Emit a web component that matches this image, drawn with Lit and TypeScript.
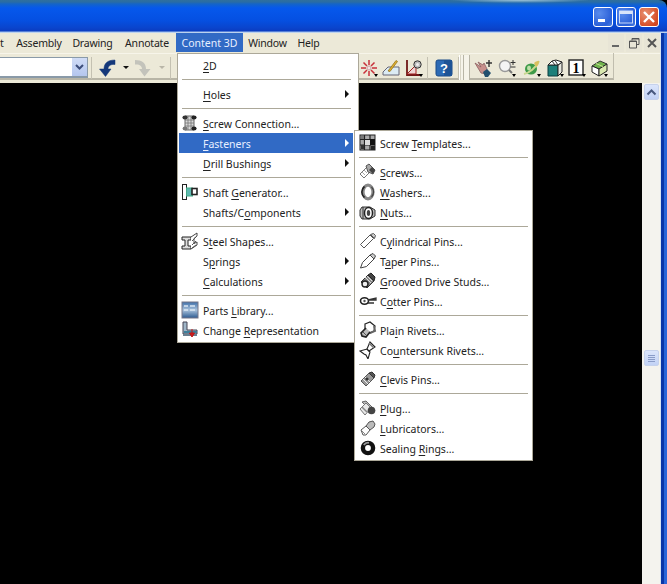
import { LitElement, html, css, svg } from "lit";
import { customElement } from "lit/decorators.js";

const tinyDrop = svg`<path d="M14 15h4l-2 3z" fill="#000"/>`;

const icons: Record<string, any> = {
  screwconn: svg`<path d="M4 2h9v14H4z" fill="#d8d8d8" stroke="#666"/><path d="M4 6h9M4 9h9M4 12h9M7 2v14M10 2v14" stroke="#777" stroke-width=".8"/><ellipse cx="4" cy="3.5" rx="2.6" ry="2" fill="#333"/><ellipse cx="13" cy="3.5" rx="2.6" ry="2" fill="#222"/><ellipse cx="4" cy="14.5" rx="2.4" ry="2" fill="#777"/><ellipse cx="13" cy="14.5" rx="2.6" ry="2" fill="#222"/>`,
  shaft: svg`<rect x="1.5" y="1.5" width="4" height="15" fill="#fff" stroke="#222"/><rect x="5.5" y="5" width="6" height="8" fill="#5fb8b0" stroke="#4a8"/><rect x="11" y="5.5" width="5" height="6" fill="#fff" stroke="#222" stroke-width="1.6"/>`,
  steel: svg`<path d="M1 5h9v3H7v6h3v3H1v-3h3V8H1z" fill="#ddd" stroke="#222"/><path d="M10 5l6-4v3l-3 2.5v5L16 10v3l-6 4" fill="#fff" stroke="#444"/><path d="M11 9l4-4M11 13l4-4M11 16l4-3" stroke="#555"/>`,
  parts: svg`<defs><linearGradient id="pg" x1="0" y1="0" x2="0" y2="1"><stop offset="0" stop-color="#3f6fa8"/><stop offset=".5" stop-color="#a9c2dc"/><stop offset="1" stop-color="#2c5a90"/></linearGradient></defs><rect x="1" y="1" width="16" height="16" fill="url(#pg)" stroke="#778"/><path d="M3 5h4M9 5h5M3 9h4M9 9h5" stroke="#dce8f4" stroke-width="1.6"/>`,
  change: svg`<path d="M2 1h4v8h10v4H2z" fill="#9fb6c8" stroke="#445"/><path d="M3 10h13v2H3z" fill="#3d7f9b"/><path d="M2 13h14v2H2z" fill="#6a7f90"/><path d="M11 8v5M8.5 12h5L11 16z" stroke="#c01818" fill="#d01c1c"/>`,
  templates: svg`<rect x="1" y="1" width="15" height="15" fill="#aaa" stroke="#222"/><path d="M5.5 1v15M11 1v15M1 5.5h15M1 11h15" stroke="#222" stroke-width="1.2"/><rect x="11" y="5" width="5" height="6" fill="#111"/><rect x="6" y="6" width="5" height="5" fill="#ddd"/><rect x="2" y="2" width="3" height="3" fill="#777"/><rect x="2" y="11" width="3" height="4" fill="#333"/><rect x="12" y="12" width="4" height="4" fill="#222"/>`,
  screws: svg`<path d="M1 11l7-7 4 4-7 7z" fill="#fff" stroke="#777"/><path d="M7 3l3-2 6 6-2 4-5-2z" fill="#a8a8a8" stroke="#555"/><path d="M10 7l4 4 2-4-3-3z" fill="#444"/><path d="M3 9l3 3M5 7l3 3" stroke="#aaa"/>`,
  washers: svg`<ellipse cx="9" cy="9" rx="5" ry="6.800" fill="none" stroke="#888" stroke-width="3.200"/><path d="M5.500 3.500A7 7 0 0 0 5.500 14.500" fill="none" stroke="#222" stroke-width="1.600"/><path d="M12.500 4A7 7 0 0 1 12.500 14" fill="none" stroke="#444" stroke-width="1.200"/>`,
  nuts: svg`<path d="M3 4h8l5 3v6l-5 3H3l-2-3V7z" fill="#bbb" stroke="#333"/><ellipse cx="9.5" cy="10" rx="4" ry="5.5" fill="#fff" stroke="#222" stroke-width="1.5"/><ellipse cx="9.5" cy="10" rx="1.7" ry="3" fill="#444"/><path d="M4 4v12" stroke="#333"/>`,
  cyl: svg`<path d="M1.5 12.5L11 3l3.5 3.5L5 16z" fill="#fff" stroke="#555"/><path d="M11.5 2.5l3-1 2 2-1 3z" fill="#ccc" stroke="#555"/>`,
  taper: svg`<path d="M1.5 16l2-5.5L11 3l4 4-7.500 7.500z" fill="#fff" stroke="#444"/><path d="M11 3l3-1.500 2.500 2.500-1.500 3z" fill="#ccc" stroke="#444"/>`,
  grooved: svg`<path d="M2 10l7-7 6 6-7 7z" fill="#888" stroke="#333"/><path d="M9 3l3-2 4 4-1 4z" fill="#444" stroke="#222"/><circle cx="6" cy="12" r="3" fill="#eee" stroke="#222" stroke-width="1.400"/><path d="M6 5l6 6M8 4l5 5" stroke="#ddd"/>`,
  cotter: svg`<ellipse cx="5.5" cy="9" rx="4" ry="3.200" fill="#fff" stroke="#222" stroke-width="1.600"/><circle cx="5.500" cy="9" r="1.200" fill="#555"/><path d="M9 8l8-2v2H9zM9 11h6" stroke="#333" stroke-width="1.300" fill="#999"/>`,
  plain: svg`<path d="M6 3l5-2 5 4-1 5-4 2-5-4z" fill="#fff" stroke="#222" stroke-width="1.200"/><path d="M11 12l5-2-1-5" fill="none" stroke="#666" stroke-width="2"/><path d="M7 7L2 12l1 3 4 1 4-5" fill="#bbb" stroke="#222" stroke-width="1.600"/><path d="M4 11l3 3" stroke="#555"/>`,
  counter: svg`<path d="M1 10l7-2 3 3-2 7-2-4-2-1z" fill="#fff" stroke="#222" stroke-width="1.100"/><path d="M8 8l3-7 5 5-6 4z" fill="#fff" stroke="#222" stroke-width="1.100"/><path d="M10 2l5 5" stroke="#777" stroke-width="1.500"/>`,
  clevis: svg`<path d="M2 11l8-8 5 5-8 8z" fill="#999" stroke="#555"/><path d="M10 3l3-1 3 3-1 3z" fill="#555" stroke="#333"/><path d="M4 9l5 5M6 7l5 5" stroke="#eee"/><circle cx="8" cy="9" r="1.600" fill="#333"/>`,
  plug: svg`<path d="M3 3l4-1 9 9-2 3z" fill="#bbb" stroke="#666"/><path d="M1 10l6-6 5 5-6 7z" fill="#e8e8e8" stroke="#777"/><circle cx="12.5" cy="11.500" r="3.800" fill="#444"/><path d="M3 8l5 5" stroke="#888" stroke-width="1.500"/>`,
  lub: svg`<path d="M2 11l5-4 4 4-4 5H4z" fill="#fff" stroke="#555"/><path d="M7 7l3-4 4-1 2 3-1 3-4 3z" fill="#bbb" stroke="#555"/><path d="M3 12l3 3" stroke="#888"/>`,
  sealing: svg`<circle cx="9" cy="9" r="5.100" fill="none" stroke="#111" stroke-width="4.400"/><path d="M4.800 6A5.300 5.300 0 0 1 10 3.800" fill="none" stroke="#999" stroke-width="1.800"/>`,
};

const tbIcons = {
  undo: svg`<path d="M17 1C10 1 6 4 6 10H1.500L7.500 17.500 13 10H10c0-3 2.500-5 7-4.500z" fill="#15387a" stroke="#15387a" stroke-width=".5"/>`,
  redo: svg`<path d="M1 1c7 0 11 3 11 9h4.500L10.500 17.500 5 10h3c0-3-2.500-5-7-4.500z" fill="#c3c3bb"/>`,
  star: svg`<g stroke="#c8303a" stroke-width="1.500"><path d="M9 1v5M9 12v5M1 9h5M12 9h5M3.500 3.500L7 7M11 11l3.500 3.500M14.500 3.500L11 7M7 11l-3.500 3.500"/></g><circle cx="9" cy="9" r="2" fill="#f4e4e4" stroke="#c8a0a0"/>${tinyDrop}`,
  pen: svg`<path d="M1 13l5-5h11v8H1z" fill="#dcecf4" stroke="#667"/><path d="M6 12L14 1.500l1.500 1L8 12.500z" fill="#e0b030" stroke="#8a6a10" stroke-width=".7"/>`,
  graph: svg`<path d="M2 1v15h14" fill="none" stroke="#701818" stroke-width="1.800"/><path d="M2 15L11 6v9z" fill="#efd4d4" stroke="#a02020"/><circle cx="12.500" cy="5.500" r="3.700" fill="#bbb" stroke="#333"/><circle cx="12.500" cy="5.500" r="1.500" fill="#eee"/>${tinyDrop}`,
  help: svg`<rect x="1" y="1" width="16" height="16" rx="2" fill="#2c6ab5" stroke="#1a4a88"/><path d="M9 1h7a1 1 0 0 1 1 1v15H9z" fill="#1d5396"/><text x="9" y="14" text-anchor="middle" font-family="Liberation Sans" font-weight="700" font-size="13" fill="#fff">?</text>`,
  hand: svg`<path d="M1 4l6 4-3-5 5 3 1-2 3 6-1 5-5-1z" fill="#c8908c" stroke="#8a6060" stroke-width=".8"/><path d="M9 13l4-3 4 4-3 4h-3z" fill="#23506e"/><path d="M15 1v7M12 4h6" stroke="#333" stroke-width="1.400"/>`,
  zoom: svg`<circle cx="7" cy="7" r="5.500" fill="#f4f4f4" stroke="#999" stroke-width="1.400"/><path d="M11 11l3 3" stroke="#777" stroke-width="2"/><path d="M15 1v5M12.500 3.500h5M12.500 8h5" stroke="#333"/>${tinyDrop}`,
  planet: svg`<ellipse cx="8" cy="10" rx="6" ry="5.500" fill="#3e9a48"/><path d="M1 15C6 14 13 9 16 2" stroke="#c8d890" stroke-width="2" fill="none"/><path d="M11 4c2-2 4-2 5-2 0 3-1 5-3 6z" fill="#d8c060"/><ellipse cx="6" cy="9" rx="2" ry="2.500" fill="#bde0a8"/>${tinyDrop}`,
  bag: svg`<path d="M2 6h10v11H2z" fill="#1d7f7a" stroke="#0d3f40"/><path d="M12 6l4-3v10l-4 4z" fill="#e8e8e0" stroke="#222"/><path d="M2 6l4-4 4-1 6 2-4 3z" fill="#fff" stroke="#222"/><path d="M6 2l3 4M9 1.500l3 4.500" stroke="#333"/>${tinyDrop}`,
  one: svg`<rect x="1" y="1" width="14" height="15" fill="#fff" stroke="#222" stroke-width="1.400"/><text x="8" y="14" text-anchor="middle" font-family="Liberation Serif" font-weight="700" font-size="14" fill="#000">1</text>${tinyDrop}`,
  cube: svg`<path d="M2 7l8-5 7 3-8 5z" fill="#6fb24c" stroke="#333"/><path d="M2 7l7 3v7l-7-4z" fill="#fff" stroke="#222"/><path d="M9 10l8-5v7l-8 5z" fill="#d9e8b0" stroke="#222"/><path d="M6 4.500l7 3" stroke="#c6e090"/>${tinyDrop}`,
};

interface Row { t?: string; k?: number; i?: string; a?: boolean; h?: boolean; sep?: boolean }
const S: Row = { sep: true };

const mainRows: Row[] = [
  { t: "2D", k: 0 }, S,
  { t: "Holes", k: 0, a: true }, S,
  { t: "Screw Connection...", k: 0, i: "screwconn" },
  { t: "Fasteners", k: 0, a: true, h: true },
  { t: "Drill Bushings", k: 0, a: true }, S,
  { t: "Shaft Generator...", k: 6, i: "shaft" },
  { t: "Shafts/Components", k: 8, a: true }, S,
  { t: "Steel Shapes...", k: 1, i: "steel" },
  { t: "Springs", k: 1, a: true },
  { t: "Calculations", k: 0, a: true }, S,
  { t: "Parts Library...", k: 6, i: "parts" },
  { t: "Change Representation", k: 7, i: "change" },
];

const subRows: Row[] = [
  { t: "Screw Templates...", k: 6, i: "templates" }, S,
  { t: "Screws...", k: 0, i: "screws" },
  { t: "Washers...", k: 0, i: "washers" },
  { t: "Nuts...", k: 0, i: "nuts" }, S,
  { t: "Cylindrical Pins...", k: 1, i: "cyl" },
  { t: "Taper Pins...", k: 1, i: "taper" },
  { t: "Grooved Drive Studs...", k: 0, i: "grooved" },
  { t: "Cotter Pins...", k: 1, i: "cotter" }, S,
  { t: "Plain Rivets...", k: 3, i: "plain" },
  { t: "Countersunk Rivets...", k: 2, i: "counter" }, S,
  { t: "Clevis Pins...", k: 0, i: "clevis" }, S,
  { t: "Plug...", k: 0, i: "plug" },
  { t: "Lubricators...", k: 0, i: "lub" },
  { t: "Sealing Rings...", k: 8, i: "sealing" },
];

@customElement("app-root")
export class AppRoot extends LitElement {
  static styles = css`
    :host { display: block; width: 667px; height: 584px; position: relative; overflow: hidden; background: #000;
      font-family: "Noto Sans", sans-serif; font-size: 10.5px; color: #1a1a1a; }
    .win { display: flex; flex-direction: column; height: 584px; }
    .title { height: 33px; flex: none; display: flex; justify-content: flex-end; align-items: center; gap: 3px; padding-right: 8px;
      box-sizing: border-box; border-top-right-radius: 8px;
      background:
        radial-gradient(ellipse 70px 3px at 520px 0, #9fc4d8, transparent),
        linear-gradient(#2f6f9f 0, #2a6ca4 2px, #1464c8 4px, #0658ec 8px, #0550e2 20px, #0a44cc 28px, #0b3cc0 31px, #9fc0ec 32px, #d8e4f2 33px); }
    .cap { width: 20px; height: 20px; border: 1px solid #fff; border-radius: 3px; box-sizing: border-box; display: flex; align-items: center; justify-content: center;
      background: radial-gradient(circle at 30% 30%, #5a8cec, #2a5fd8 70%, #4a80e0); }
    .cap.close { background: radial-gradient(circle at 30% 30%, #e89070, #d6502a 70%, #c83a18); }
    .body { flex: 1; display: flex; min-height: 0; }
    .content { flex: 1; display: flex; flex-direction: column; min-width: 0; background: #ece9d8; }
    .frame { width: 7px; flex: none; background: linear-gradient(90deg, #d6e4f2 0 1px, #0a36a8 1px 4px, #2a66d8 4px 7px); }
    .menubar { height: 20px; flex: none; display: flex; justify-content: space-between; }
    .mitems { display: grid; grid-template-columns: 11px 56px 51px 58px 67px 49px 33px; height: 19px; }
    .mi { display: flex; align-items: center; justify-content: center; white-space: nowrap; color: #222; letter-spacing: -0.2px; }
    .mi.first { justify-content: flex-start; }
    .mi.on { background: #316ac5; color: #e8efff; letter-spacing: 0; }
    .mdi { display: flex; align-items: center; gap: 2px; }
    .mdi-b { width: 16px; height: 18px; display: flex; align-items: center; justify-content: center; background: #e8e5d6; }
    .toolwrap { height: 30px; flex: none; box-sizing: border-box; background: linear-gradient(#f7f5ea 0 1px, #ece9d8 1px); }
    .toolbar { height: 27px; width: 614px; display: flex; align-items: center; box-sizing: border-box; padding-top: 4px; border-bottom: 2px solid #b8b5a6; border-right: 1px solid #c0bdae; }
    .combo { width: 88px; height: 21px; background: #fff; border: 1px solid #8a9aa8; border-left: 0; box-sizing: border-box; display: flex; justify-content: flex-end; flex: none; border-bottom-width: 2px; }
    .combo-b { width: 15px; background: linear-gradient(#d0dcf6, #b4c6ee); display: flex; align-items: center; justify-content: center; }
    .tsep { width: 1px; height: 22px; background: #c4c1b2; flex: none; }
    .tb { width: 18px; height: 18px; flex: none; display: block; }
    .drop { width: 0; height: 0; border: 3px solid transparent; border-top: 3px solid #111; border-bottom: 0; flex: none; }
    .drop.off { border-top-color: #b9b6a8; }
    .under { width: 189px; flex: none; }
    .grip { width: 9px; height: 25px; flex: none; margin: 0 4px 0 0; border-left: 1px solid #fff; border-right: 1px solid #b8b5a6; background: linear-gradient(90deg, #d8d5c6 0 1px, #f6f4ea 1px 3px, #b8b5a6 3px 4px, #f6f4ea 4px); }
    .main { flex: 1; display: flex; min-height: 0; }
    .canvas { flex: 1; background: #000; }
    .sb { width: 18px; flex: none; box-sizing: border-box; background: #f4f3ee; display: flex; flex-direction: column; align-items: center; padding-top: 1px; }
    .sb-btn { width: 15px; height: 16px; background: linear-gradient(#dbe5fb, #c2d2f5); border: 1px solid #c6d2ec; border-radius: 2px; box-sizing: border-box; display: flex; align-items: center; justify-content: center; flex: none; }
    .thumb { margin-top: 250px; }
    .menu { position: absolute; background: #fff; border: 1px solid #aca899; box-sizing: border-box; }
    .menu.m1 { left: 177px; top: 53px; width: 182px; height: 290px; padding: 1px 5px 1px 1px; }
    .menu.m2 { left: 354px; top: 130px; width: 179px; height: 331px; padding: 2px 1px 1px 0; }
    .m1 .row { padding-left: 24px; width: 174px; }
    .m2 .row { padding-left: 25px; }
    .row { height: 20px; position: relative; display: flex; align-items: center; white-space: nowrap; color: #222; padding-top: 1px; box-sizing: border-box; }
    .row.h { background: #316ac5; color: #e8efff; }
    u { text-underline-offset: 2px; text-decoration-thickness: 1px; }
    .sepw { height: 9px; display: flex; align-items: center; padding: 0 2px 0 3px; box-sizing: border-box; }
    .m2 .sepw { padding: 0 3px 0 4px; }
    .sepw i { flex: 1; height: 1px; background: #aca899; display: block; }
    .ic { position: absolute; left: 2px; top: 1px; width: 18px; height: 18px; }
    .m2 .ic { left: 4px; }
    .arr { position: absolute; right: 4px; top: 6px; width: 0; height: 0; border: 4px solid transparent; border-left: 4px solid #111; border-right: 0; }
    .row.h .arr { border-left-color: #fff; }
  `;

  private label(r: Row) {
    const t = r.t!, k = r.k ?? 0;
    return html`<span>${t.slice(0, k)}<u>${t[k]}</u>${t.slice(k + 1)}</span>`;
  }

  private rows(list: Row[]) {
    return list.map((r) =>
      r.sep
        ? html`<div class="sepw"><i></i></div>`
        : html`<div class="row ${r.h ? "h" : ""}">
            ${r.i ? html`<svg class="ic" viewBox="0 0 18 18">${icons[r.i]}</svg>` : ""}
            ${this.label(r)}
            ${r.a ? html`<span class="arr"></span>` : ""}
          </div>`
    );
  }

  private tb(name: keyof typeof tbIcons, ml: number) {
    return html`<svg class="tb" style="margin-left:${ml}px" viewBox="0 0 18 18">${tbIcons[name]}</svg>`;
  }

  render() {
    return html`
      <div class="win">
        <div class="title">
          <div class="cap"><svg width="12" height="12" viewBox="0 0 12 12"><rect x="1" y="8" width="7" height="3" fill="#fff"/></svg></div>
          <div class="cap"><svg width="14" height="14" viewBox="0 0 14 14"><rect x=".5" y="1" width="13" height="12" fill="none" stroke="#c8d8f8"/><rect x=".5" y="1" width="13" height="3" fill="#d8e4fa"/></svg></div>
          <div class="cap close"><svg width="14" height="14" viewBox="0 0 14 14"><path d="M2 2l10 10M12 2L2 12" stroke="#fff" stroke-width="2.400"/></svg></div>
        </div>
        <div class="body">
          <div class="content">
            <div class="menubar">
              <div class="mitems">
                <div class="mi first">t</div>
                <div class="mi">Assembly</div>
                <div class="mi">Drawing</div>
                <div class="mi">Annotate</div>
                <div class="mi on">Content 3D</div>
                <div class="mi">Window</div>
                <div class="mi">Help</div>
              </div>
              <div class="mdi">
                <div class="mdi-b"><svg width="10" height="10" viewBox="0 0 10 10"><rect x="1" y="7" width="7" height="2" fill="#666"/></svg></div>
                <div class="mdi-b"><svg width="11" height="11" viewBox="0 0 11 11"><path d="M3 2.500V.5h7v6H8M.5 3h7v7h-7z" fill="none" stroke="#555"/><path d="M3 1h7M.5 3.500h7" stroke="#555"/></svg></div>
                <div class="mdi-b"><svg width="10" height="10" viewBox="0 0 10 10"><path d="M1 1l8 8M9 1L1 9" stroke="#555" stroke-width="2"/></svg></div>
              </div>
            </div>
            <div class="toolwrap">
              <div class="toolbar">
                <div class="combo"><div class="combo-b"><svg width="9" height="7" viewBox="0 0 9 7"><path d="M1 1l3.500 3.500L8 1" fill="none" stroke="#3c4d7a" stroke-width="2"/></svg></div></div>
                <div class="tsep" style="margin-left:3px"></div>
                ${this.tb("undo", 6)}
                <div class="drop" style="margin:0 0 0 7px"></div>
                ${this.tb("redo", 5)}
                <div class="drop off" style="margin-left:7px"></div>
                <div class="tsep" style="margin-left:5px"></div>
                <div class="under"></div>
                ${this.tb("star", 0)}
                ${this.tb("pen", 4)}
                ${this.tb("graph", 5)}
                <div class="tsep" style="margin-left:4px"></div>
                ${this.tb("help", 7)}
                <div class="tsep" style="margin-left:5px"></div>
                <div class="grip"></div>
                ${this.tb("hand", 0)}
                ${this.tb("zoom", 6)}
                ${this.tb("planet", 7)}
                ${this.tb("bag", 5)}
                ${this.tb("one", 4)}
                ${this.tb("cube", 4)}
              </div>
            </div>
            <div class="main">
              <div class="canvas"></div>
              <div class="sb">
                <div class="sb-btn"><svg width="11" height="8" viewBox="0 0 11 8"><path d="M1.500 6.500l4-4 4 4" fill="none" stroke="#47587e" stroke-width="2"/></svg></div>
                <div class="sb-btn thumb"><svg width="9" height="9" viewBox="0 0 9 9"><path d="M1 1.500h7M1 3.500h7M1 5.500h7M1 7.500h7" stroke="#8a9cc8"/></svg></div>
              </div>
            </div>
          </div>
          <div class="frame"></div>
        </div>
      </div>
      <div class="menu m1">${this.rows(mainRows)}</div>
      <div class="menu m2">${this.rows(subRows)}</div>
    `;
  }
}
